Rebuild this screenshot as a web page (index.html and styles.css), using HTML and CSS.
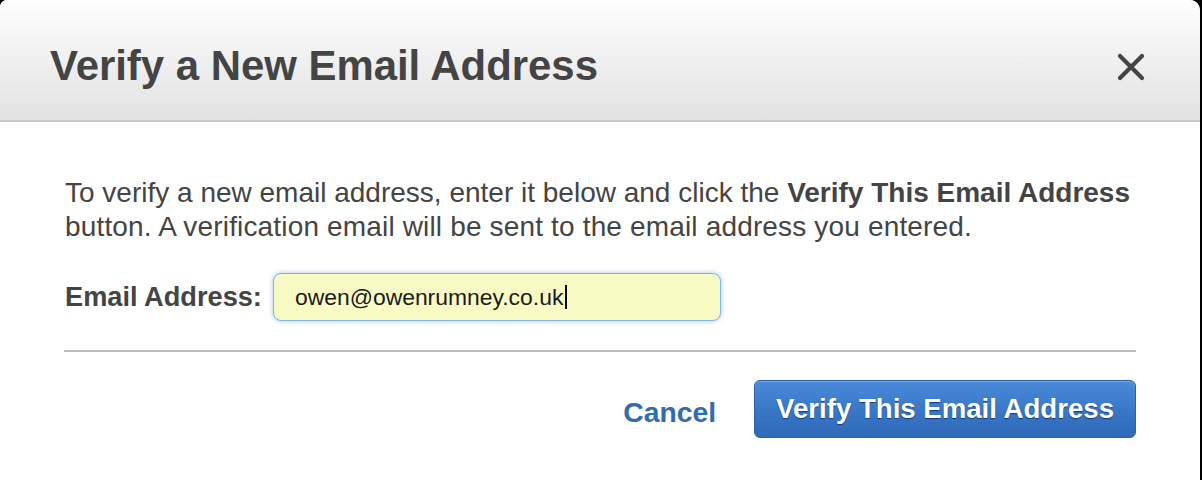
FILE: index.html
```html
<!DOCTYPE html>
<html lang="en">
<head>
<meta charset="utf-8">
<title>Verify a New Email Address</title>
<link rel="stylesheet" href="styles.css">
</head>
<body>
<div class="dialog">
  <div class="dialog-header">
    <h1 class="dialog-title">Verify a New Email Address</h1>
    <button class="close-btn" aria-label="Close">
      <svg width="28" height="28" viewBox="0 0 28 28" aria-hidden="true">
        <path d="M3 3 L25 25 M25 3 L3 25" stroke="#444" stroke-width="4.2" stroke-linecap="round" fill="none"/>
      </svg>
    </button>
  </div>
  <div class="dialog-body">
    <p class="intro">To verify a new email address, enter it below and click the <b>Verify This Email Address</b><br><span class="second-line">button. A verification email will be sent to the email address you entered.</span></p>
    <div class="form-row">
      <label class="field-label">Email Address:</label>
      <div class="text-field"><span class="field-value">owen@owenrumney.co.uk</span><span class="caret"></span></div>
    </div>
    <hr class="divider">
    <div class="actions">
      <a class="cancel-link" href="#">Cancel</a>
      <button class="primary-btn">Verify This Email Address</button>
    </div>
  </div>
</div>
</body>
</html>
```
FILE: styles.css
```css
html, body {
  margin: 0;
  padding: 0;
  background: #000;
  height: 480px;
  overflow: hidden;
}

.dialog {
  width: 1200px;
  height: 480px;
  background: #fff;
  border-radius: 7px 10px 0 0;
  overflow: hidden;
  font-family: "Liberation Sans", Arial, sans-serif;
  color: #444;
}

.dialog-header {
  box-sizing: border-box;
  height: 122px;
  padding: 45px 55px 0 50px;
  display: flex;
  justify-content: space-between;
  align-items: flex-start;
  background: linear-gradient(#fefefe, #f4f4f4 35%, #e2e2e2);
  border-bottom: 2px solid #c9c9c9;
}

.dialog-title {
  margin: 0;
  font-size: 41.9px;
  line-height: 41.5px;
  font-weight: bold;
  color: #444;
}

.close-btn {
  margin-top: 8px;
  padding: 0;
  border: 0;
  background: none;
  width: 28px;
  height: 28px;
  display: block;
}

.close-btn svg {
  display: block;
}

.dialog-body {
  padding: 54px 64px 0 64px;
}

.intro {
  margin: 0 -10px 0 1px;
  font-size: 28px;
  line-height: 34px;
  color: #444;
}

.intro b {
  font-weight: bold;
}

.second-line {
  letter-spacing: 0.16px;
}

.form-row {
  margin-top: 29px;
  display: flex;
  align-items: center;
  gap: 11px;
  padding-left: 1px;
}

.field-label {
  font-size: 27.2px;
  line-height: 34px;
  font-weight: bold;
  color: #444;
}

.text-field {
  box-sizing: border-box;
  width: 448px;
  height: 48px;
  padding-left: 21px;
  display: flex;
  align-items: center;
  background: #f8fbc3;
  border: 1px solid #86b3e2;
  border-radius: 8px;
  box-shadow: 0 0 5px rgba(90, 155, 230, 0.55);
  font-size: 22.9px;
  color: #1a1a1a;
}

.field-value {
  line-height: 48px;
}

.caret {
  display: inline-block;
  width: 2px;
  height: 24px;
  margin-left: 2px;
  background: #000;
}

.divider {
  margin: 29px 0 0 0;
  border: 0;
  height: 2px;
  background: #bdbdbd;
}

.actions {
  margin-top: 28px;
  display: flex;
  justify-content: flex-end;
  align-items: center;
  gap: 38px;
}

.cancel-link {
  font-size: 28.3px;
  font-weight: bold;
  color: #2f6cb0;
  text-decoration: none;
  line-height: 34px;
  margin-top: 5px;
}

.primary-btn {
  box-sizing: border-box;
  height: 58px;
  padding: 0 21px;
  font-family: "Liberation Sans", Arial, sans-serif;
  font-size: 27.6px;
  font-weight: bold;
  color: #fff;
  text-shadow: 0 1px 1px rgba(10, 40, 90, 0.75);
  background: linear-gradient(#4b8bda, #3a78c8 50%, #2f69b8);
  border: 1px solid #2c60a8;
  border-radius: 6px;
  box-shadow: inset 0 1px 0 rgba(255, 255, 255, 0.25);
}
```
